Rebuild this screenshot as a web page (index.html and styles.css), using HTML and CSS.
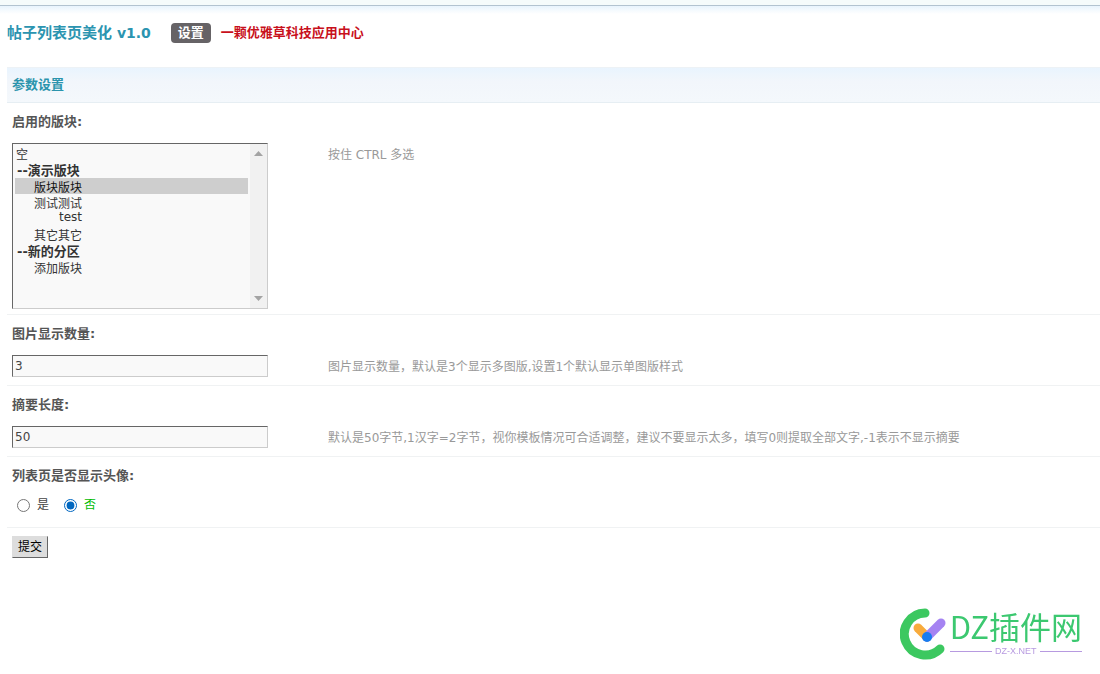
FILE: index.html
```html
<!DOCTYPE html>
<html lang="zh-CN">
<head>
<meta charset="utf-8">
<title>帖子列表页美化</title>
<link rel="stylesheet" href="styles.css">
</head>
<body>
<div class="topbar"></div>
<main class="page">
  <header class="header">
    <h1 class="title"><span class="title-name">帖子列表页美化</span> v1.0</h1>
    <a class="tab" href="#">设置</a>
    <a class="center-link" href="#">一颗优雅草科技应用中心</a>
  </header>
  <form class="form">
    <h2 class="section">参数设置</h2>
    <div class="row row-list">
      <label class="label" for="forums">启用的版块:</label>
      <div class="fields">
        <div class="listbox">
          <select class="list" id="forums" multiple size="10">
            <option>空</option>
            <optgroup label="--演示版块">
              <option class="sub" selected>版块版块</option>
              <option class="sub">测试测试</option>
              <option class="deep">test</option>
              <option class="sub">其它其它</option>
            </optgroup>
            <optgroup label="--新的分区">
              <option class="sub">添加版块</option>
            </optgroup>
          </select>
          <div class="scroll" aria-hidden="true">
            <svg width="9" height="5" viewBox="0 0 9 5"><path d="M0 5 4.500 0 9 5z" fill="#a3a3a3"/></svg>
            <svg width="9" height="5" viewBox="0 0 9 5"><path d="M0 0 4.500 5 9 0z" fill="#a3a3a3"/></svg>
          </div>
        </div>
        <p class="hint">按住 CTRL 多选</p>
      </div>
    </div>
    <div class="row">
      <label class="label" for="count">图片显示数量:</label>
      <div class="fields">
        <input class="text" id="count" type="text" value="3">
        <p class="hint">图片显示数量，默认是3个显示多图版,设置1个默认显示单图版样式</p>
      </div>
    </div>
    <div class="row">
      <label class="label" for="length">摘要长度:</label>
      <div class="fields">
        <input class="text" id="length" type="text" value="50">
        <p class="hint">默认是50字节,1汉字=2字节，视你模板情况可合适调整，建议不要显示太多，填写0则提取全部文字,-1表示不显示摘要</p>
      </div>
    </div>
    <div class="row" role="radiogroup" aria-labelledby="avatar">
      <div class="label" id="avatar">列表页是否显示头像:</div>
      <div class="radios">
        <label class="choice"><input class="radio" type="radio" name="avatar">是</label>
        <label class="choice"><input class="radio" type="radio" name="avatar" checked>否</label>
      </div>
    </div>
    <button class="submit" type="submit">提交</button>
  </form>
</main>
<div class="brand">
  <svg width="48" height="52" viewBox="0 0 48 52" fill="none" stroke-linecap="round">
    <path d="M25 5A21 21 0 1 0 40 41" stroke="#3cc860" stroke-width="9"/>
    <path d="M18 20 27 29" stroke="#f8ab3c" stroke-width="9"/>
    <path d="M41 15 27 29" stroke="#a583f2" stroke-width="9"/>
    <circle cx="27" cy="29" r="5" fill="#187cf0"/>
  </svg>
  <div class="brand-text">
    <div class="brand-name">DZ插件网</div>
    <div class="brand-site">DZ-X.NET</div>
  </div>
</div>
</body>
</html>
```
FILE: styles.css
```css
* { box-sizing: border-box; }
body {
  margin: 0;
  background: #fff;
  color: #444;
  font: 12px/16px "DejaVu Sans", "Noto Sans CJK SC", sans-serif;
}
h1, h2, p { margin: 0; }
a { text-decoration: none; }
.topbar {
  height: 14px;
  border-top: 5px solid #f5fbfb;
  background: linear-gradient(#b2c3d0 1px, #e8f4fd 1px, #fff) padding-box;
}
.page { padding-left: 7px; }
.header {
  display: flex;
  align-items: center;
  height: 38px;
  margin-bottom: 15px;
}
.title {
  margin-right: 20px;
  color: #2b94b0;
  font-size: 14px;
  line-height: 20px;
}
.title-name { font-size: 15px; }
.tab {
  margin-right: 10px;
  padding: 0 7px;
  border-radius: 4px;
  background: #666366;
  color: #fff;
  font-size: 13px;
  font-weight: bold;
  line-height: 20px;
}
.center-link {
  color: #c8101c;
  font-size: 13px;
  font-weight: bold;
}
.section {
  padding: 0 5px;
  border-top: 1px solid #edf2f6;
  border-bottom: 1px solid #e6eef3;
  background: linear-gradient(#e9f4fe, #f2f6fb 40%, #f4f8fc);
  color: #2b94ad;
  font-size: 13px;
  line-height: 34px;
}
.row {
  min-height: 71px;
  padding: 0 0 6px 5px;
  border-bottom: 1px solid #f0f2f3;
}
.row-list { padding-bottom: 5px; }
.label {
  display: block;
  color: #555;
  font-size: 13px;
  font-weight: bold;
  line-height: 38px;
}
.fields {
  display: grid;
  grid-template-columns: 256px 1fr;
  column-gap: 60px;
  padding-top: 2px;
}
.hint {
  color: #999;
  line-height: 24px;
}
.listbox, .text {
  border: 1px solid;
  border-color: #666 #ccc #ccc #666;
  background: #f9f9f9;
}
.text {
  width: 100%;
  height: 22px;
  padding: 0 2px;
  color: #444;
  font: inherit;
}
.listbox {
  display: flex;
  height: 166px;
}
.list {
  flex: 1;
  min-width: 0;
  height: 100%;
  padding: 1px 2px;
  border: 0;
  outline: 0;
  overflow: hidden;
  background: transparent;
  color: #333;
  font: inherit;
}
.list option {
  height: 16px;
  min-height: 16px;
  padding: 0 1px;
  font-size: 12px;
  font-weight: normal;
}
.list optgroup {
  margin-top: -1px;
  padding: 0;
  font-size: 13px;
  font-weight: bold;
}
.list optgroup option:first-child { margin-top: -2px; }
.list .sub { padding-left: 19px; }
.list .deep { padding-left: 44px; }
.list option::before { content: none; }
.list option:checked { background: #cecece linear-gradient(#cecece, #cecece); color: #111; }
.scroll {
  display: flex;
  flex-direction: column;
  justify-content: space-between;
  align-items: center;
  width: 17px;
  padding: 7px 0;
  background: #f1f1f1;
}
.radios {
  display: flex;
  gap: 15px;
  padding: 0 5px;
  line-height: 20px;
}
.choice {
  display: flex;
  align-items: center;
  gap: 7px;
}
.choice:has(:checked) { color: #0b0; }
.radio {
  width: 13px;
  height: 13px;
  margin: 0;
  accent-color: #0067c0;
}
.submit {
  display: block;
  height: 22px;
  margin: 8px 5px;
  padding: 0 5px;
  border: 1px solid;
  border-color: #ddd #666 #666 #ddd;
  background: #ddd;
  color: #000;
  font: inherit;
}
.brand {
  position: fixed;
  right: 18px;
  bottom: 14px;
  display: flex;
  gap: 2px;
}
.brand-name {
  color: #3cc870;
  font: 31px/36px "Noto Sans CJK SC", sans-serif;
}
.brand-site {
  display: flex;
  align-items: center;
  gap: 3px;
  margin-top: 2px;
  color: #b79ae0;
  font: 9px/10px "Liberation Sans", sans-serif;
}
.brand-site::before, .brand-site::after {
  content: "";
  flex: 1;
  height: 1px;
  background: #b79ae0;
}
```
